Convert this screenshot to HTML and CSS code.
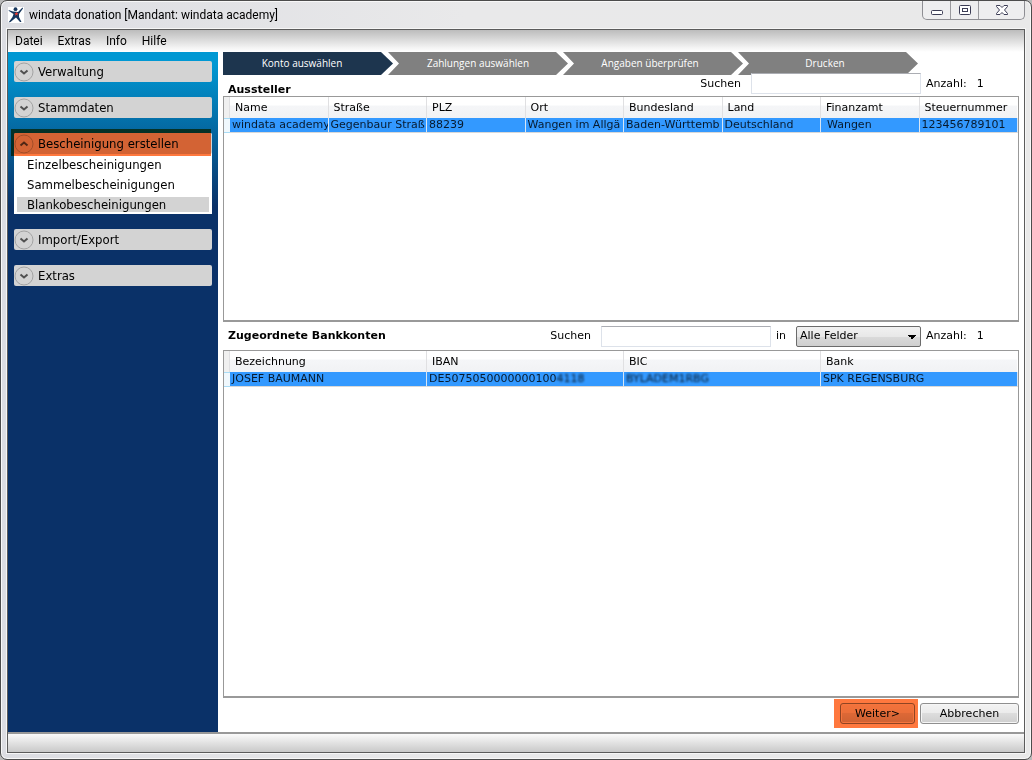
FILE: index.html
```html
<!DOCTYPE html>
<html lang="de">
<head>
<meta charset="utf-8">
<title>windata donation [Mandant: windata academy]</title>
<link rel="stylesheet" href="styles.css">
</head>
<body>
<div class="window">
  <header class="titlebar">
    <svg class="logo" viewBox="0 0 16 16" aria-hidden="true">
      <rect width="16" height="16" fill="#fff"/>
      <circle cx="7.500" cy="2.200" r="1.900" fill="#17375e"/>
      <path d="M0.500 3 L5 4.500 L10 5 L14.500 0.500 L15 1.500 L11 7 L11 10 L13.500 15 L12 15 L8 10.500 L2.500 15 L0.500 15.500 L4.500 10 L5.500 7 L1 4 Z" fill="#17375e"/>
      <path d="M8.500 4.500 L9 6 L10.500 6 L9.300 7.100 L9.800 8.700 L8.500 7.700 L7 8.700 L7.500 7.100 L6.300 6 L8 6 Z" fill="#e43b32"/>
    </svg>
    <h1 class="title">windata donation [Mandant: windata academy]</h1>
    <div class="controls">
      <button type="button" class="control" aria-label="Minimieren"><svg width="14" height="14" viewBox="0 0 14 14"><rect x="1.500" y="7.500" width="11" height="4" rx="1" fill="#fff" stroke="#3c3d55"/></svg></button>
      <button type="button" class="control" aria-label="Maximieren"><svg width="14" height="14" viewBox="0 0 14 14"><rect x="1.500" y="2.500" width="11" height="9" rx="1" fill="#fff" stroke="#3c3d55"/><rect x="4.500" y="5.500" width="5" height="3" fill="#fff" stroke="#3c3d55"/></svg></button>
      <button type="button" class="control control-close" aria-label="Schließen"><svg width="14" height="14" viewBox="0 0 14 14"><path d="M1.500 2.500H5L7 4.500L9 2.500H12.500V3.500L9.500 7L12.500 10.500V11.500H9L7 9.500L5 11.500H1.500V10.500L4.500 7L1.500 3.500Z" fill="#fff" stroke="#3c3d55"/></svg></button>
    </div>
  </header>
  <div class="client">
    <nav class="menu">
      <button type="button">Datei</button>
      <button type="button">Extras</button>
      <button type="button">Info</button>
      <button type="button">Hilfe</button>
    </nav>
    <div class="workspace">
      <aside class="sidebar">
        <button type="button" class="group"><svg class="chevron" viewBox="0 0 20 20"><circle cx="10" cy="10" r="9"/><path d="M6.500 8.500L10 11.500L13.500 8.500"/></svg>Verwaltung</button>
        <button type="button" class="group"><svg class="chevron" viewBox="0 0 20 20"><circle cx="10" cy="10" r="9"/><path d="M6.500 8.500L10 11.500L13.500 8.500"/></svg>Stammdaten</button>
        <section class="open-group">
          <button type="button" class="group"><svg class="chevron" viewBox="0 0 20 20"><circle cx="10" cy="10" r="9"/><path d="M6.500 11.500L10 8.500L13.500 11.500"/></svg>Bescheinigung erstellen</button>
          <ul class="entries">
            <li><a href="#einzel">Einzelbescheinigungen</a></li>
            <li><a href="#sammel">Sammelbescheinigungen</a></li>
            <li><a href="#blanko" class="selected">Blankobescheinigungen</a></li>
          </ul>
          <span class="marker"></span>
        </section>
        <button type="button" class="group"><svg class="chevron" viewBox="0 0 20 20"><circle cx="10" cy="10" r="9"/><path d="M6.500 8.500L10 11.500L13.500 8.500"/></svg>Import/Export</button>
        <button type="button" class="group"><svg class="chevron" viewBox="0 0 20 20"><circle cx="10" cy="10" r="9"/><path d="M6.500 8.500L10 11.500L13.500 8.500"/></svg>Extras</button>
      </aside>
      <main class="main">
        <ol class="steps">
          <li class="step current">Konto auswählen</li>
          <li class="step">Zahlungen auswählen</li>
          <li class="step">Angaben überprüfen</li>
          <li class="step">Drucken</li>
        </ol>
        <div class="bar bar-issuer">
          <h2>Aussteller</h2>
          <label for="search-issuer">Suchen</label>
          <input id="search-issuer" type="text">
          <p class="count"><span>Anzahl:</span><span>1</span></p>
        </div>
        <div class="frame frame-issuer">
          <table>
            <colgroup><col class="gutter"><col span="8"></colgroup>
            <thead><tr><th></th><th>Name</th><th>Straße</th><th>PLZ</th><th>Ort</th><th>Bundesland</th><th>Land</th><th>Finanzamt</th><th>Steuernummer</th></tr></thead>
            <tbody><tr><td></td><td>windata academy</td><td>Gegenbaur Straß</td><td>88239</td><td>Wangen im Allgä</td><td>Baden-Württemb</td><td>Deutschland</td><td class="inset">Wangen</td><td>123456789101</td></tr></tbody>
          </table>
        </div>
        <div class="bar bar-accounts">
          <h2>Zugeordnete Bankkonten</h2>
          <label for="search-account">Suchen</label>
          <input id="search-account" type="text">
          <label class="in" for="field">in</label>
          <select id="field"><option>Alle Felder</option></select>
          <p class="count"><span>Anzahl:</span><span>1</span></p>
        </div>
        <div class="frame frame-accounts">
          <table>
            <colgroup><col class="gutter"><col span="4"></colgroup>
            <thead><tr><th></th><th>Bezeichnung</th><th>IBAN</th><th>BIC</th><th>Bank</th></tr></thead>
            <tbody><tr><td></td><td>JOSEF BAUMANN</td><td>DE5075050000000100<span class="masked">4118</span></td><td><span class="masked">BYLADEM1RBG</span></td><td>SPK REGENSBURG</td></tr></tbody>
          </table>
        </div>
        <div class="actions">
          <div class="next"><button type="button" class="push">Weiter&gt;</button><span class="marker"></span></div>
          <button type="button" class="push cancel">Abbrechen</button>
        </div>
      </main>
    </div>
    <footer class="status"></footer>
  </div>
</div>
</body>
</html>
```
FILE: styles.css
```css
* { box-sizing: border-box; }

body {
  margin: 0;
  background: #b9b9b9;
  color: #000;
  font: 11px/14px "DejaVu Sans", Verdana, sans-serif;
}

button, input, select { font: inherit; color: inherit; margin: 0; }
h1, h2, p, ol, ul { margin: 0; padding: 0; list-style: none; }

.window {
  display: flex;
  flex-direction: column;
  height: 100vh;
  min-height: 480px;
  padding: 0 6px 6px;
  border: 1px solid #4c4c4c;
  border-radius: 7px;
  background: linear-gradient(90deg, #dcdde2, #e9e9ea 45%, #e9e9e9);
  box-shadow: inset 0 0 0 1px #f8f8f8;
}

.titlebar {
  display: flex;
  align-items: flex-start;
  height: 28px;
  flex: none;
}
.logo { width: 16px; height: 16px; margin: 6px 5px 0 1px; }
.title {
  flex: 1;
  margin-top: 5px;
  font: 12px/18px Roboto, "Segoe UI", sans-serif;
}
.controls {
  display: flex;
  height: 19px;
  border: 1px solid #8e8e93;
  border-top: 0;
  border-radius: 0 0 5px 5px;
  background: #eeeeef;
}
.control {
  display: flex;
  align-items: center;
  justify-content: center;
  width: 28px;
  padding: 0;
  border: 0;
  border-right: 1px solid #9a9a9e;
  background: none;
}
.control-close { width: 45px; border-right: 0; }

.client {
  display: flex;
  flex-direction: column;
  flex: 1;
  min-height: 0;
  border: 1px solid #5b5b5b;
  background: #fff;
  box-shadow: 0 0 0 1px #f6f6f6;
}
.menu {
  display: flex;
  gap: 15px;
  height: 22px;
  flex: none;
  padding: 0 7px;
  background: linear-gradient(#bcbcbc, #f3f3f3 80%, #fff);
}
.menu button {
  padding: 0;
  border: 0;
  background: none;
  font: 12px/22px Roboto, "Segoe UI", sans-serif;
}
.workspace { display: flex; flex: 1; min-height: 0; }
.status {
  height: 20px;
  flex: none;
  border-top: 2px solid #989898;
  background: linear-gradient(#fafafa, #c9c9c9);
}

.sidebar {
  display: flex;
  flex-direction: column;
  gap: 15px;
  width: 210px;
  flex: none;
  padding: 9px 6px;
  background: linear-gradient(#0098d3, #0098d3 12px, #0a3168 155px);
  font: 13px/20px "DejaVu Sans Condensed", Tahoma, sans-serif;
}
.group {
  display: flex;
  align-items: center;
  gap: 4px;
  width: 100%;
  height: 21px;
  padding: 0;
  border: 0;
  border-radius: 2px;
  background: #d3d3d3;
  text-align: left;
}
.chevron { width: 20px; height: 20px; fill: none; stroke: #a3a3a3; }
.chevron path { stroke: #505050; stroke-width: 2; }
.open-group { position: relative; background: #fff; border-radius: 2px; }
.entries { padding: 3px 3px 0; border-bottom: 2px solid #fff; }
.entries a {
  display: block;
  margin-bottom: 4px;
  padding-left: 10px;
  line-height: 16px;
  color: #000;
  text-decoration: none;
}
.entries li:last-child a { margin-bottom: 0; line-height: 15px; }
.entries .selected { background: #d3d3d3; }
.marker {
  position: absolute;
  inset: 0;
  background: #ff783e;
  mix-blend-mode: multiply;
  pointer-events: none;
}
.open-group .marker { inset: -4px 1px auto -3px; height: 27px; }

.main {
  display: flex;
  flex-direction: column;
  flex: 1;
  min-width: 0;
  padding: 0 5px 4px;
}
.steps {
  display: flex;
  height: 23px;
  flex: none;
  color: #fff;
  font: 10px/23px "Open Sans", Calibri, sans-serif;
  text-align: center;
}
.step {
  width: 180px;
  margin-left: -5px;
  background: #808080;
  clip-path: polygon(0 0, calc(100% - 12px) 0, 100% 50%, calc(100% - 12px) 100%, 0 100%, 11px 50%);
}
.step:nth-child(n+3) { padding-right: 6px; }
.step.current {
  width: 170px;
  margin-left: 0;
  padding-right: 12px;
  background: #1d354e;
  clip-path: polygon(0 0, calc(100% - 12px) 0, 100% 50%, calc(100% - 12px) 100%, 0 100%);
}

.bar { display: flex; align-items: center; flex: none; padding-left: 5px; }
.bar h2 { flex: 1; font-size: 11px; line-height: 14px; }
.bar-issuer { height: 21px; }
.bar-issuer h2 { padding-top: 8px; }
.bar-issuer label, .bar-issuer input, .bar-issuer .count { margin-top: -4px; }
.bar-accounts { height: 28px; }
.bar input {
  position: relative;
  width: 170px;
  height: 21px;
  margin-left: 10px;
  padding: 0 4px;
  border: 1px solid #dde2ea;
  border-top-color: #abadb3;
  background: #fff;
}
.bar .in { margin: 0 10px 0 5px; }
.bar select {
  width: 125px;
  height: 21px;
  padding: 0 3px;
  border: 1px solid #6b6b6b;
  border-radius: 2px;
  appearance: none;
  background:
    conic-gradient(from -45deg at 50% 100%, transparent 0 0) right 4px top 9px / 8px 4px no-repeat,
    conic-gradient(from -45deg at 50% 4px, #000 90deg, transparent 0) right 4px top 8px / 8px 4px no-repeat,
    linear-gradient(#f1f1f1, #e8e8e8 50%, #dadada 50%, #cfcfcf);
}
.count { display: flex; gap: 10px; width: 98px; padding-left: 5px; }

.frame {
  min-height: 0;
  overflow: hidden;
  border: 1px solid #999;
  border-bottom-width: 2px;
}
.frame-issuer { flex: 225 1 0; }
.frame-accounts { flex: 348 1 0; }
table { width: 100%; table-layout: fixed; border-collapse: separate; border-spacing: 0; }
.gutter { width: 6px; }
th, td { overflow: hidden; padding: 0 0 0 2px; white-space: nowrap; text-align: left; }
th {
  height: 21px;
  padding: 1px 0 0 5px;
  border-right: 1px solid #e0e0e2;
  background: linear-gradient(#fff 40%, #f5f6f8 41%, #f1f2f4);
  font-weight: 400;
}
th:first-child { padding: 0; background: #f0f0f0; }
th:last-child { border-right-color: #fff; }
td {
  height: 15px;
  line-height: 14px;
  border-right: 1px solid #d8e6f5;
  border-bottom: 1px solid #d8d8d8;
  background: #3399ff;
  color: #071a2e;
}
td:first-child { padding: 0; border: 1px solid #a9dcf5; border-width: 1px 0; background: #f0f8fd; }
td.inset { padding-left: 6px; }
.masked { filter: blur(1px); }

.actions { display: flex; gap: 2px; flex: none; padding-top: 1px; justify-content: flex-end; }
.next { position: relative; width: 84px; padding: 4px 3px 4px 6px; }
.push {
  width: 75px;
  height: 21px;
  padding: 0;
  display: block;
  border: 1px solid #8f8f8f;
  border-radius: 3px;
  background: linear-gradient(#f3f3f3, #ebebeb 50%, #dddddd 50%, #cfcfcf);
  box-shadow: inset 0 0 0 1px #f6f6f6;
}
.cancel { width: 99px; margin-top: 4px; }
```
